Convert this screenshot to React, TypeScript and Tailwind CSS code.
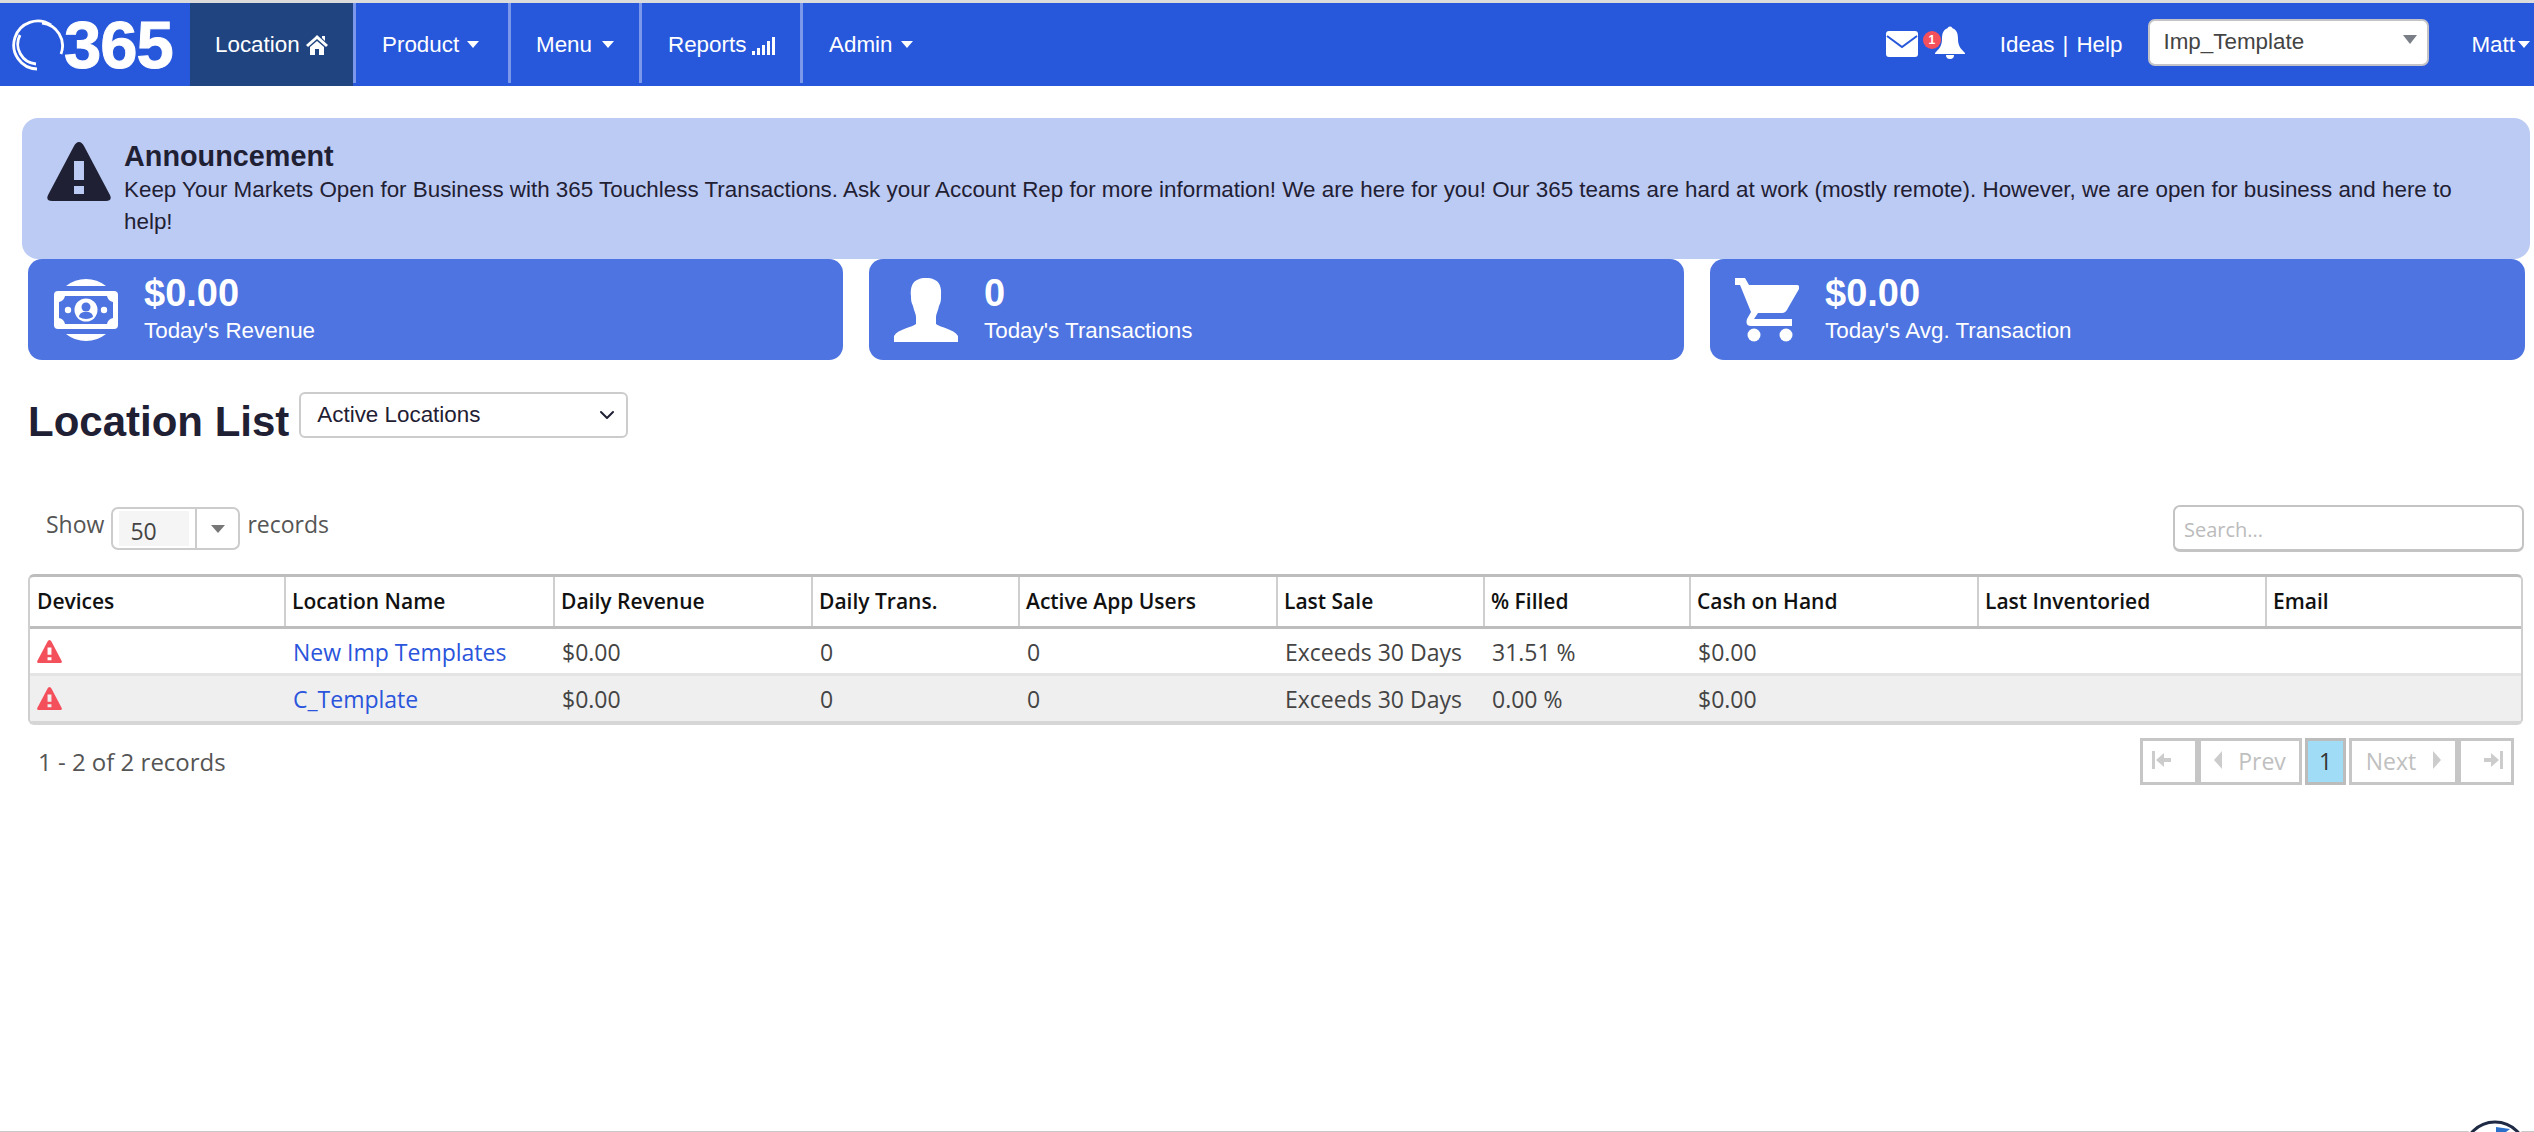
import { ChevronDown } from "lucide-react";
import type { ReactNode } from "react";

const sans = "font-['Liberation_Sans',Arial,sans-serif]";

function Caret({ className = "" }: { className?: string }) {
  return (
    <span
      className={`inline-block h-0 w-0 border-x-[6px] border-t-[7px] border-x-transparent border-t-white ${className}`}
    />
  );
}

function Logo() {
  return (
    <div className="flex h-full w-[190px] items-center pl-[12px]">
      <svg width="52" height="54" viewBox="0 0 52 54" fill="none" stroke="white" strokeWidth="2.8" className="shrink-0">
        <path d="M25 51 A24 24 0 1 1 39 7" />
        <path d="M30 5 A23 23 0 0 1 49 36" />
        <path d="M8 17 A20 20 0 0 0 24 46" />
      </svg>
      <span className="text-[67px] leading-none font-bold tracking-[-1px] text-white [-webkit-text-stroke:1px_white]">365</span>
    </div>
  );
}

function Tab({ width, active, pad, children }: { width: string; active?: boolean; pad: string; children: ReactNode }) {
  return (
    <div className={`flex items-center ${width}`}>
      <div className={`flex h-full flex-1 items-center text-[22.4px] text-white ${pad} ${active ? "bg-[#1f4480]" : ""}`}>
        {children}
      </div>
      <div className="h-[80px] w-[3px] self-start bg-[#7b98ea]" />
    </div>
  );
}

function TopNav() {
  return (
    <nav className="flex h-[86px] border-t-[3px] border-[#dcdcdc] bg-[#2757db]">
      <Logo />
      <Tab width="w-[166px]" pad="pl-[25px]" active>
        Location
        <svg width="22" height="20" viewBox="0 0 22 20" fill="white" className="ml-[6px]">
          <path d="M11 0 L22 10 L20 12 L11 4 L2 12 L0 10 L8 3Z" />
          <path d="M16 1h3v5l-3-3z" />
          <path d="M4 12 L11 6 L18 12 V20 H13 V14 H9 V20 H4Z" />
        </svg>
      </Tab>
      <Tab width="w-[155px]" pad="pl-[26px]">
        Product <Caret className="ml-[8px]" />
      </Tab>
      <Tab width="w-[131px]" pad="pl-[25px]">
        Menu <Caret className="ml-[10px]" />
      </Tab>
      <Tab width="w-[161px]" pad="pl-[26px]">
        Reports
        <svg width="24" height="18" viewBox="0 0 24 18" fill="white" className="mt-[2px] ml-[6px]">
          <rect x="0" y="14" width="3" height="4" />
          <rect x="5" y="11" width="3" height="7" />
          <rect x="10" y="8" width="3" height="10" />
          <rect x="15" y="4" width="3" height="14" />
          <rect x="20" y="0" width="3" height="18" />
        </svg>
      </Tab>
      <div className="flex items-center pl-[26px] text-[22.4px] text-white">
        Admin <Caret className="ml-[9px]" />
      </div>

      <div className="ml-auto flex items-center text-white">
        <svg width="32" height="26" viewBox="0 0 32 26" className="mb-[2px]">
          <rect width="32" height="26" rx="3" fill="white" />
          <path d="M1 5 L16 16 L31 5" fill="none" stroke="#2757db" strokeWidth="2" />
        </svg>
        <div className="relative mb-[4px] ml-[17px]">
          <svg width="30" height="34" viewBox="0 0 30 34" fill="white">
            <circle cx="15" cy="3" r="2.5" />
            <path d="M15 2 C22 2 23 8 23 13 C23 20 26 23 30 27 V28 H0 V27 C4 23 7 20 7 13 C7 8 8 2 15 2Z" />
            <path d="M11 29 H19 A4 4 0 0 1 11 29Z" />
          </svg>
          <span className="absolute top-[5px] left-[-12px] flex h-[18px] w-[18px] items-center justify-center rounded-full bg-[#f4505c] text-[12px] font-bold text-white">
            1
          </span>
        </div>
        <span className="ml-[35px] text-[22.4px]">Ideas</span>
        <span className="mx-[8px] text-[22.4px]">|</span>
        <span className="text-[22.4px]">Help</span>
        <div className="relative mb-[4px] ml-[26px] flex h-[47px] w-[281px] items-center rounded-[7px] border-[2px] border-[#c4c4c8] bg-white pb-[2px] pl-[13px] text-[22.4px] text-[#444]">
          Imp_Template
          <span className="absolute top-[14px] right-[10px] h-0 w-0 border-x-[7px] border-t-[9px] border-x-transparent border-t-[#7a7f87]" />
        </div>
        <span className="ml-[42px] text-[22.4px]">Matt</span>
        <Caret className="mr-[4px] ml-[3px]" />
      </div>
    </nav>
  );
}

function WarningIcon({ size, color }: { size: number; color: string }) {
  return (
    <svg width={size} height={size * 0.92} viewBox="0 0 64 59">
      <path
        fillRule="evenodd"
        fill={color}
        d="M32 0 C34 0 36 2 37 4 L63 53 C65 57 63 59 59 59 H5 C1 59 -1 57 1 53 L27 4 C28 2 30 0 32 0Z M27 19 V38 H37 V19Z M27 44 V52 H37 V44Z"
      />
    </svg>
  );
}

function MoneyIcon() {
  return (
    <svg width="64" height="64" viewBox="0 0 64 64">
      <path d="M12 8 A32 32 0 0 1 52 8Z" fill="white" />
      <path d="M12 56 A32 32 0 0 0 52 56Z" fill="white" />
      <rect x="0" y="13" width="64" height="38" rx="4" fill="white" />
      <path
        d="M11 18 H53 Q54 23 59 24 V40 Q54 41 53 46 H11 Q10 41 5 40 V24 Q10 23 11 18Z"
        fill="#4d74e0"
      />
      <circle cx="32" cy="32" r="11.5" fill="white" />
      <circle cx="32" cy="29" r="4.5" fill="#4d74e0" />
      <path d="M25 39 C26 34 29 34 32 34 C35 34 38 34 39 39 Q32 43 25 39Z" fill="#4d74e0" />
      <circle cx="14" cy="32" r="3.2" fill="white" />
      <circle cx="50" cy="32" r="3.2" fill="white" />
    </svg>
  );
}

function PersonIcon() {
  return (
    <svg width="64" height="64" viewBox="0 0 64 64" fill="white">
      <path d="M32 0 C45 0 48 8 47 18 C47 22 47 24 45 28 C44 33 42 36 42 39 V46 C45 49 60 51 64 58 V64 H0 V58 C4 51 19 49 22 46 V39 C22 36 20 33 19 28 C17 24 17 22 17 18 C16 8 19 0 32 0Z" />
    </svg>
  );
}

function CartIcon() {
  return (
    <svg width="64" height="64" viewBox="0 0 64 64" fill="white">
      <path d="M0 0 H10 L14 7 H62 Q65 7 64 11 L53 30 Q51 35 47 35 H23 L19 41 H57 V48 H16 Q10 48 12 41 L16 34 L5 7 H0Z" />
      <circle cx="19" cy="57" r="6.5" />
      <circle cx="51" cy="57" r="6.5" />
    </svg>
  );
}

function StatCard({ icon, value, label, gap }: { icon: ReactNode; value: string; label: string; gap: string }) {
  return (
    <div className={`flex h-[101px] items-center rounded-[14px] bg-[#4d74e0] text-white ${gap}`}>
      <div className="shrink-0">{icon}</div>
      <div className="mb-[4px] ml-[26px] flex flex-col">
        <span className="text-[38px] leading-[44px] font-bold">{value}</span>
        <span className="mt-[3px] text-[22.4px] leading-[26px]">{label}</span>
      </div>
    </div>
  );
}

const columns = [
  { name: "Devices", w: "w-[255px]" },
  { name: "Location Name", w: "w-[269px]" },
  { name: "Daily Revenue", w: "w-[258px]" },
  { name: "Daily Trans.", w: "w-[207px]" },
  { name: "Active App Users", w: "w-[258px]" },
  { name: "Last Sale", w: "w-[207px]" },
  { name: "% Filled", w: "w-[206px]" },
  { name: "Cash on Hand", w: "w-[288px]" },
  { name: "Last Inventoried", w: "w-[288px]" },
  { name: "Email", w: "w-[257px]" },
];

const rows = [
  { name: "New Imp Templates", filled: "31.51 %" },
  { name: "C_Template", filled: "0.00 %" },
];

function LocationsTable() {
  return (
    <div className="mx-[28px] mt-[22px] mr-[11px] overflow-hidden rounded-t-[6px] rounded-b-[6px] border-x-[2px] border-t-[3px] border-b-[4px] border-x-[#cfcfcf] border-t-[#bdbdbd] border-b-[#d6d6d6]">
      <table className="w-full table-fixed border-collapse text-left text-[21px]">
        <thead>
          <tr className="h-[50px] border-b-[3px] border-[#bdbdbd]">
            {columns.map((c, i) => (
              <th
                key={c.name}
                className={`${c.w} font-semibold text-[#111] ${i > 0 ? "border-l-[2px] border-[#cfcfcf] pl-[6px]" : "pl-[7px]"}`}
              >
                {c.name}
              </th>
            ))}
          </tr>
        </thead>
        <tbody className="text-[23px] leading-[30px] text-[#444]">
          {rows.map((r, i) => (
            <tr key={r.name} className={`h-[47px] ${i === 1 ? "bg-[#efefef]" : "border-b-[3px] border-[#e4e4e4]"}`}>
              <td className="pl-[7px]">
                <div className="pt-[1px]">
                  <WarningIcon size={25} color="#f4505c" />
                </div>
              </td>
              <td className="pt-[2px] pl-[8px] text-[#2a55dc]">{r.name}</td>
              <td className="pt-[2px] pl-[8px]">$0.00</td>
              <td className="pt-[2px] pl-[8px]">0</td>
              <td className="pt-[2px] pl-[8px]">0</td>
              <td className="pt-[2px] pl-[8px]">Exceeds 30 Days</td>
              <td className="pt-[2px] pl-[8px]">{r.filled}</td>
              <td className="pt-[2px] pl-[8px]">$0.00</td>
              <td />
              <td />
            </tr>
          ))}
        </tbody>
      </table>
    </div>
  );
}

function PageBtn({ width, children, active }: { width: string; children: ReactNode; active?: boolean }) {
  return (
    <div
      className={`flex h-[47px] items-center justify-center border-[3px] text-[23px] ${width} ${
        active ? "border-[#bcbcbc] bg-[#a0dcf5] text-[#333]" : "border-[#c6c6c6] bg-white text-[#c0c0c0]"
      }`}
    >
      {children}
    </div>
  );
}

function Pager() {
  return (
    <div className="flex items-center">
      <PageBtn width="w-[58px]">
        <svg width="22" height="20" viewBox="0 0 22 20" fill="#ccc" className="mr-[14px] mb-[3px]">
          <rect x="1" y="1" width="3" height="18" />
          <path d="M5 10 L13 3 V8 H20 V12 H13 V17Z" />
        </svg>
      </PageBtn>
      <PageBtn width="w-[104px]">
        <span className="mr-[16px] mb-[3px] h-0 w-0 border-y-[9px] border-r-[8px] border-y-transparent border-r-[#ccc]" />
        Prev
      </PageBtn>
      <div className="w-[3px]" />
      <PageBtn width="w-[41px]" active>
        1
      </PageBtn>
      <div className="w-[3px]" />
      <PageBtn width="w-[109px]">
        Next
        <span className="mb-[3px] ml-[17px] h-0 w-0 border-y-[9px] border-l-[8px] border-y-transparent border-l-[#ccc]" />
      </PageBtn>
      <PageBtn width="w-[56px]">
        <svg width="22" height="20" viewBox="0 0 22 20" fill="#ccc" className="mb-[3px] ml-[14px]">
          <rect x="18" y="1" width="3" height="18" />
          <path d="M17 10 L9 3 V8 H2 V12 H9 V17Z" />
        </svg>
      </PageBtn>
    </div>
  );
}

export default function App() {
  return (
    <div className={`relative h-[1132px] w-[2534px] overflow-hidden bg-white ${sans}`}>
      <TopNav />

      <section className="mt-[32px] mr-[4px] ml-[22px] flex h-[141px] rounded-[16px] bg-[#bccbf4] pt-[20px] pr-[40px] pl-[25px] text-[#1f2033]">
        <div className="mt-[4px] shrink-0">
          <WarningIcon size={64} color="#1f2033" />
        </div>
        <div className="ml-[13px]">
          <div className="text-[28.8px] leading-[36px] font-bold">Announcement</div>
          <p className="text-[22.4px] leading-[32px]">
            Keep Your Markets Open for Business with 365 Touchless Transactions. Ask your Account Rep for more
            information! We are here for you! Our 365 teams are hard at work (mostly remote). However, we are open for
            business and here to help!
          </p>
        </div>
      </section>

      <section className="mr-[9px] ml-[28px] grid grid-cols-3 gap-[26px]">
        <StatCard icon={<MoneyIcon />} value="$0.00" label="Today's Revenue" gap="pl-[26px]" />
        <StatCard icon={<PersonIcon />} value="0" label="Today's Transactions" gap="pl-[25px]" />
        <StatCard icon={<CartIcon />} value="$0.00" label="Today's Avg. Transaction" gap="pl-[25px]" />
      </section>

      <section className="mt-[32px] ml-[28px] flex items-start">
        <h1 className="mt-[6px] text-[42px] leading-[48px] font-bold text-[#1f2033]">Location List</h1>
        <div className="ml-[10px] flex h-[46px] w-[329px] items-center justify-between rounded-[6px] border-[2px] border-[#ccc] bg-white pr-[7px] pl-[16px] text-[22.4px] text-[#1f2033]">
          Active Locations
          <ChevronDown size={24} strokeWidth={2} />
        </div>
      </section>

      <section className="mt-[59px] flex items-start justify-between pr-[10px] pl-[46px] font-['Open_Sans',sans-serif] text-[23px] text-[#555]">
        <div className="mt-[2px] flex items-center">
          <span className="mb-[8px]">Show</span>
          <div className="ml-[7px] flex h-[43px] w-[129px] rounded-[7px] border-[2px] border-[#ccc]">
            <div className="my-[2px] ml-[6px] flex w-[70px] items-center bg-[#f5f5f5] pt-[6px] pl-[11px] text-[#444]">50</div>
            <div className="ml-[6px] flex flex-1 items-center justify-center border-l-[2px] border-[#ccc]">
              <span className="h-0 w-0 border-x-[7px] border-t-[8px] border-x-transparent border-t-[#777]" />
            </div>
          </div>
          <span className="mb-[8px] ml-[7px]">records</span>
        </div>
        <div className="flex h-[47px] w-[351px] items-center rounded-[7px] border-[2px] border-b-[3px] border-[#c4c4c4] pt-[3px] pl-[9px] text-[20px] text-[#bbb]">
          Search...
        </div>
      </section>

      <div className="font-['Open_Sans',sans-serif]">
        <LocationsTable />
        <div className="mt-[13px] flex items-center justify-between pr-[20px] pl-[38px] text-[24px] text-[#555]">
          <span>1 - 2 of 2 records</span>
          <Pager />
        </div>
      </div>

      <div className="absolute right-0 bottom-0 left-0 h-[1px] bg-[#c8c8c8]" />
      <svg width="70" height="14" viewBox="0 0 70 14" className="absolute right-[4px] bottom-0">
        <circle cx="35" cy="35" r="34" fill="white" />
        <circle cx="35" cy="35" r="31" fill="none" stroke="#1f2a44" strokeWidth="3" />
        <path d="M36 9 L50 11 L46 14 H36Z" fill="#2a6fc9" />
      </svg>
    </div>
  );
}
